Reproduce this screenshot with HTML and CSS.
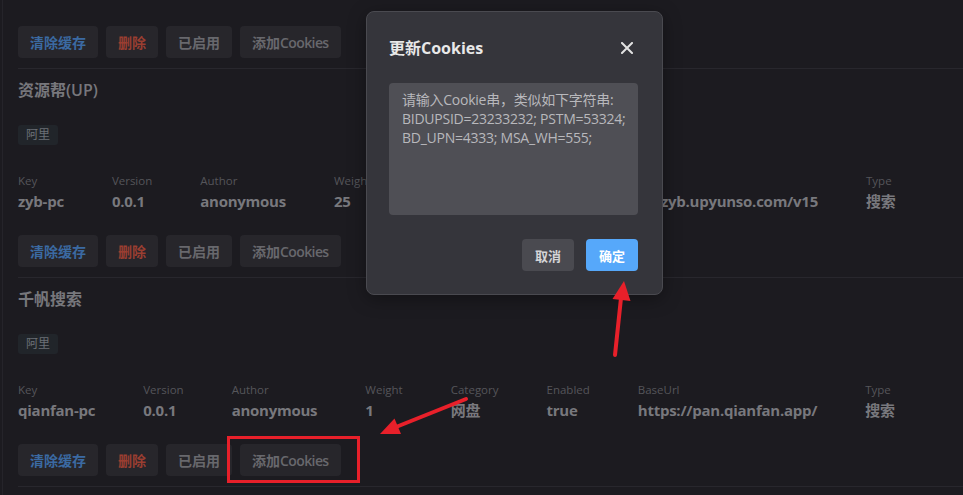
FILE: index.html
```html
<!DOCTYPE html>
<html lang="zh-CN">
<head>
<meta charset="utf-8">
<title>Plugins</title>
<link rel="stylesheet" href="styles.css">
</head>
<body>
<div class="page">
  <div class="actions">
    <button class="btn btn-blue">清除缓存</button>
    <button class="btn btn-red">删除</button>
    <button class="btn">已启用</button>
    <button class="btn">添加<span class="latin">Cookies</span></button>
  </div>

  <section class="plugin">
    <h3 class="title">资源帮(UP)</h3>
    <div class="tags"><span class="tag">阿里</span></div>
    <div class="meta">
      <div class="field"><div class="label">Key</div><div class="value">zyb-pc</div></div>
      <div class="field"><div class="label">Version</div><div class="value">0.0.1</div></div>
      <div class="field"><div class="label">Author</div><div class="value">anonymous</div></div>
      <div class="field"><div class="label">Weight</div><div class="value">25</div></div>
      <div class="field"><div class="label">Category</div><div class="value">网盘</div></div>
      <div class="field"><div class="label">Enabled</div><div class="value">true</div></div>
      <div class="field"><div class="label">BaseUrl</div><div class="value">https://zyb.upyunso.com/v15</div></div>
      <div class="field"><div class="label">Type</div><div class="value">搜索</div></div>
    </div>
    <div class="actions">
      <button class="btn btn-blue">清除缓存</button>
      <button class="btn btn-red">删除</button>
      <button class="btn">已启用</button>
      <button class="btn">添加<span class="latin">Cookies</span></button>
    </div>
  </section>

  <section class="plugin">
    <h3 class="title">千帆搜索</h3>
    <div class="tags"><span class="tag">阿里</span></div>
    <div class="meta">
      <div class="field"><div class="label">Key</div><div class="value">qianfan-pc</div></div>
      <div class="field"><div class="label">Version</div><div class="value">0.0.1</div></div>
      <div class="field"><div class="label">Author</div><div class="value">anonymous</div></div>
      <div class="field"><div class="label">Weight</div><div class="value">1</div></div>
      <div class="field"><div class="label">Category</div><div class="value">网盘</div></div>
      <div class="field"><div class="label">Enabled</div><div class="value">true</div></div>
      <div class="field"><div class="label">BaseUrl</div><div class="value">https://pan.qianfan.app/</div></div>
      <div class="field"><div class="label">Type</div><div class="value">搜索</div></div>
    </div>
    <div class="actions">
      <button class="btn btn-blue">清除缓存</button>
      <button class="btn btn-red">删除</button>
      <button class="btn">已启用</button>
      <button class="btn">添加<span class="latin">Cookies</span></button>
    </div>
  </section>

  <section class="plugin"></section>
</div>

<div class="modal">
  <div class="modal-header">
    <span class="modal-title">更新Cookies</span>
    <svg class="close" width="12" height="12" viewBox="0 0 12 12"><path d="M1 1L11 11M11 1L1 11" stroke="#e2e2e2" stroke-width="2" stroke-linecap="square" fill="none"/></svg>
  </div>
  <div class="textarea">请输入Cookie串，类似如下字符串:<br>BIDUPSID=23233232; PSTM=53324;<br>BD_UPN=4333; MSA_WH=555;</div>
  <div class="modal-footer">
    <button class="mbtn mbtn-cancel">取消</button>
    <button class="mbtn mbtn-ok">确定</button>
  </div>
</div>

<svg class="annot" width="963" height="495" viewBox="0 0 963 495">
  <line x1="615" y1="355" x2="621" y2="298" stroke="#e8202a" stroke-width="4" stroke-linecap="round"/>
  <polygon points="624,281 612.5,299 630.5,301" fill="#e8202a"/>
  <line x1="466" y1="399" x2="396" y2="427" stroke="#e8202a" stroke-width="4" stroke-linecap="round"/>
  <polygon points="380,434 394.5,418.5 401,434" fill="#e8202a"/>
  <rect x="228.5" y="437.5" width="130" height="44" fill="none" stroke="#e8202a" stroke-width="3"/>
</svg>
</body>
</html>
```

FILE: styles.css
```css
html, body {
  margin: 0;
  padding: 0;
}
body {
  background: #1c1b20;
  font-family: "Open Sans", "Noto Sans CJK SC", sans-serif;
  width: 963px;
  height: 495px;
  overflow: hidden;
  position: relative;
}
.page {
  margin-left: 2px;
  border-left: 1px solid #25242a;
  padding-left: 15px;
  padding-top: 26px;
  height: 469px;
}
.actions {
  display: flex;
  gap: 8px;
}
.btn {
  height: 32px;
  padding: 0 12px;
  border: none;
  border-radius: 4px;
  background: #27262b;
  color: #68686d;
  font-family: "Open Sans", "Noto Sans CJK SC", sans-serif;
  font-size: 14px;
  font-weight: 600;
  display: flex;
  align-items: center;
}
.btn .latin {
  letter-spacing: -0.6px;
}
.btn-blue { color: #3b6aa2; }
.btn-red { color: #9a3e31; }
.plugin {
  border-top: 1px solid #28272d;
  margin-top: 10px;
  padding-top: 9px;
}
.title {
  margin: 0;
  font-size: 16px;
  line-height: 24px;
  font-weight: 600;
  color: #77777c;
}
.tags {
  margin-top: 23px;
  display: flex;
}
.tag {
  height: 20px;
  line-height: 20px;
  padding: 0 8px;
  font-size: 12px;
  border-radius: 3px;
  background: #21252a;
  color: #6b7076;
}
.meta {
  margin-top: 27px;
  display: flex;
  gap: 48px;
}
.field {
  display: flex;
  flex-direction: column;
}
.label {
  font-size: 11.5px;
  line-height: 18px;
  color: #55555a;
}
.value {
  font-size: 15px;
  line-height: 22px;
  font-weight: 700;
  letter-spacing: -0.25px;
  color: #78787d;
  white-space: nowrap;
}
.plugin .actions {
  margin-top: 23px;
}
.modal {
  position: absolute;
  left: 366px;
  top: 11px;
  width: 297px;
  height: 284px;
  box-sizing: border-box;
  border: 1px solid #4a4a50;
  border-radius: 8px;
  background: #35353b;
  box-shadow: 0 4px 18px rgba(0, 0, 0, 0.35);
  padding: 24px 24px 23px 22px;
  display: flex;
  flex-direction: column;
}
.modal-header {
  display: flex;
  align-items: center;
  justify-content: space-between;
  height: 24px;
}
.modal-title {
  font-size: 16px;
  line-height: 24px;
  font-weight: 700;
  color: #e8e8e8;
}
.close {
  margin-right: 5px;
}
.textarea {
  margin-top: 23px;
  height: 132px;
  box-sizing: border-box;
  border-radius: 4px;
  background: #4f4f55;
  padding: 7px 13px;
  font-size: 14px;
  line-height: 19px;
  letter-spacing: -0.25px;
  color: #b8b8bc;
  white-space: nowrap;
}
.modal-footer {
  margin-top: 24px;
  display: flex;
  justify-content: flex-end;
  gap: 12px;
}
.mbtn {
  width: 52px;
  height: 32px;
  border: none;
  border-radius: 4px;
  font-family: "Open Sans", "Noto Sans CJK SC", sans-serif;
  font-size: 13px;
  font-weight: 700;
  display: flex;
  align-items: center;
  justify-content: center;
  padding: 0;
}
.mbtn-cancel {
  background: #4a4a50;
  color: #d4d4d6;
}
.mbtn-ok {
  background: #56a8fa;
  color: #ffffff;
}
.annot {
  position: absolute;
  left: 0;
  top: 0;
  pointer-events: none;
}
```
